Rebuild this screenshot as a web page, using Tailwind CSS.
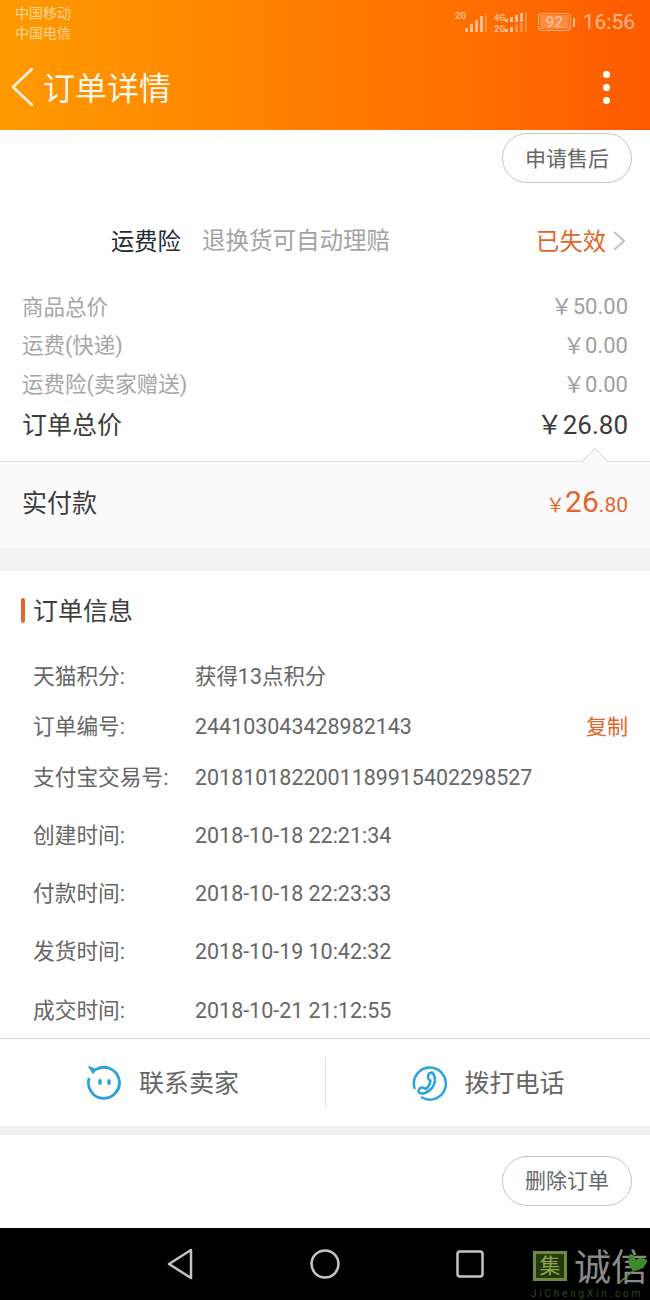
<!DOCTYPE html>
<html lang="zh-CN">
<head>
  <meta charset="UTF-8" />
  <meta name="viewport" content="width=device-width, initial-scale=1" />
  <title>订单详情</title>
  <script src="https://cdn.jsdelivr.net/npm/@tailwindcss/browser@4"></script>
</head>
<body class="bg-white">
  <div class="w-[650px] h-[1300px] overflow-hidden flex flex-col font-['Roboto','Noto_Sans_CJK_SC',sans-serif] text-[#666]">

    <!-- Header -->
    <header class="h-[130px] shrink-0 bg-gradient-to-r from-[#ff9a00] to-[#ff5a00] flex flex-col">
      <div class="h-[44px] flex justify-between pl-[15px] pr-[15px]">
        <div class="pt-[3px] text-[14px] leading-[20px] text-white/60">
          <div>中国移动</div>
          <div>中国电信</div>
        </div>
        <div class="flex items-center h-[44px] text-white/55">
          <svg width="76" height="24" viewBox="0 0 76 24" fill="none" class="mr-[7px]">
            <text x="0" y="9" font-size="9" font-weight="700" fill="currentColor" font-family="Roboto">2G</text>
            <g fill="currentColor">
              <rect x="10" y="18" width="3" height="4"/><rect x="15" y="14" width="3" height="8"/><rect x="20" y="10" width="3" height="12"/><rect x="25" y="6" width="3" height="16"/><rect x="30" y="3" width="1.500" height="19" opacity=".6"/>
              <rect x="50" y="9" width="3" height="3"/><rect x="55" y="7" width="3" height="5"/><rect x="60" y="5" width="3" height="7"/><rect x="65" y="3" width="3" height="9"/><rect x="70" y="2" width="1.500" height="10" opacity=".6"/>
              <rect x="50" y="19" width="3" height="3"/><rect x="55" y="17" width="3" height="5"/><rect x="60" y="15" width="3" height="7" opacity=".5"/><rect x="65" y="13" width="3" height="9" opacity=".5"/><rect x="70" y="12" width="1.500" height="10" opacity=".5"/>
            </g>
            <text x="39" y="11" font-size="9" font-weight="700" fill="currentColor" font-family="Roboto">4G</text>
            <text x="39" y="22" font-size="9" font-weight="700" fill="currentColor" font-family="Roboto">2G</text>
          </svg>
          <div class="w-[33px] h-[18px] border border-white/50 rounded-[3px] p-[1px]">
            <div class="w-full h-full bg-white/25 text-[15px] leading-[14px] text-center">92</div>
          </div>
          <div class="w-[2px] h-[9px] bg-white/55 ml-[2px] mr-[8px]"></div>
          <div class="text-[21px] leading-none">16:56</div>
        </div>
      </div>
      <div class="flex-1 flex items-center pl-[11px] pr-[40px]">
        <svg width="24" height="40" viewBox="0 0 24 40" fill="none" stroke="#fff" stroke-width="2.500" stroke-linecap="round" stroke-linejoin="round" class="mr-[8px] opacity-90">
          <path d="M21 2 L2 20 L21 38" />
        </svg>
        <div class="text-[32px] leading-[40px] text-white/95 pt-[4px] h-[44px]">订单详情</div>
        <div class="ml-auto flex flex-col gap-[6px]">
          <div class="w-[7px] h-[7px] rounded-full bg-white"></div>
          <div class="w-[7px] h-[7px] rounded-full bg-white"></div>
          <div class="w-[7px] h-[7px] rounded-full bg-white"></div>
        </div>
      </div>
    </header>

    <!-- Price summary -->
    <section class="h-[332px] shrink-0 flex flex-col relative">
      <div class="flex justify-end pt-[3px] pr-[18px]">
        <button class="w-[130px] h-[50px] pt-[3px] rounded-[25px] border border-[#c4c4c4] text-[21px] text-[#666]">申请售后</button>
      </div>
      <div class="flex items-center h-[44px] mt-[37px] pl-[111px] pr-[24px] text-[23.300px]">
        <span class="text-[#1f2a33]">运费险</span>
        <span class="ml-[21px] text-[#a3a3a3] text-[23.500px]">退换货可自动理赔</span>
        <span class="ml-auto text-[#e2662a]">已失效</span>
        <svg width="14" height="22" viewBox="0 0 14 22" fill="none" stroke="#c2c2c2" stroke-width="2" class="ml-[6px] -mt-[3px]"><path d="M2 2 L12 11 L2 20" /></svg>
      </div>
      <div class="mt-[25px] px-[22px] text-[21.500px] text-[#a6a6a6]">
        <div class="flex justify-between items-center h-[38px]"><span>商品总价</span><span class="text-[22px] text-[#a0a0a0] -mt-[3px]">￥50.00</span></div>
        <div class="flex justify-between items-center h-[39px]"><span>运费(快递)</span><span class="text-[22px] text-[#a0a0a0] -mt-[3px]">￥0.00</span></div>
        <div class="flex justify-between items-center h-[39px]"><span>运费险(卖家赠送)</span><span class="text-[22px] text-[#a0a0a0] -mt-[3px]">￥0.00</span></div>
        <div class="flex justify-between items-center h-[42px] text-[25px] text-[#3c3c3c]"><span>订单总价</span><span class="text-[26px] leading-none -mt-[3px]">￥26.80</span></div>
      </div>
      <div class="absolute left-[0px] bottom-[0px] w-full h-[1px] bg-[#dedede]"></div>
      <div class="absolute right-[45px] bottom-[-10px] w-[20px] h-[20px] rotate-45 bg-[#fafafa] border-l border-t border-[#dedede]"></div>
    </section>

    <section class="h-[86px] shrink-0 bg-[#fafafa] flex items-center justify-between px-[22px] pb-[2px]">
      <span class="text-[25px] text-[#3c3c3c]">实付款</span>
      <span class="text-[#e2662a] flex items-baseline text-[21px] leading-none pb-[4px]">
        <span class="text-[19px]">￥</span><span class="text-[30px]">26</span><span>.80</span>
      </span>
    </section>

    <div class="h-[23px] shrink-0 bg-[#f2f2f2]"></div>

    <!-- Order info -->
    <section class="h-[467px] shrink-0">
      <div class="flex items-center h-[81px] pl-[21px] text-[25px] text-[#3c3c3c]">
        <span class="w-[4px] h-[25px] rounded-[2px] bg-[#e2662a] mr-[8px] -mt-[2px]"></span>订单信息
      </div>
      <dl class="pl-[33px] pr-[22px] text-[21.450px] text-[#666]">
        <div class="flex items-center h-[50px]"><dt class="w-[162px] text-[21.700px]">天猫积分:</dt><dd>获得13点积分</dd></div>
        <div class="flex items-center h-[51px]"><dt class="w-[162px] text-[21.700px]">订单编号:</dt><dd>244103043428982143</dd><span class="ml-auto text-[21px] text-[#e2662a]">复制</span></div>
        <div class="flex items-center h-[50px]"><dt class="w-[162px] text-[21.700px]">支付宝交易号:</dt><dd>2018101822001189915402298527</dd></div>
        <div class="flex items-center h-[58px] mt-[4px]"><dt class="w-[162px] text-[21.700px]">创建时间:</dt><dd>2018-10-18 22:21:34</dd></div>
        <div class="flex items-center h-[58px]"><dt class="w-[162px] text-[21.700px]">付款时间:</dt><dd>2018-10-18 22:23:33</dd></div>
        <div class="flex items-center h-[58px]"><dt class="w-[162px] text-[21.700px]">发货时间:</dt><dd>2018-10-19 10:42:32</dd></div>
        <div class="flex items-center h-[60px]"><dt class="w-[162px] text-[21.700px]">成交时间:</dt><dd>2018-10-21 21:12:55</dd></div>
      </dl>
    </section>

    <!-- Contact -->
    <section class="h-[88px] shrink-0 border-t border-[#d8d8d8] flex items-center text-[25px] text-[#666]">
      <div class="w-[325px] flex items-center justify-center gap-[17px]">
        <svg width="36" height="36" viewBox="0 0 36 36" fill="none" stroke="#2aa3dc" stroke-width="2.800" stroke-linejoin="round">
          <path d="M10 4.500 A15.500 15.500 0 1 1 3.200 13" />
          <path d="M2.500 1.500 L10.500 4.500 L7 8.500 Z" fill="#2aa3dc" stroke-width="1" />
          <ellipse cx="14" cy="17" rx="1.800" ry="3" fill="#2aa3dc" stroke="none" />
          <ellipse cx="23" cy="17" rx="1.800" ry="3" fill="#2aa3dc" stroke="none" />
        </svg>
        <span class="pt-[3px]">联系卖家</span>
      </div>
      <div class="w-[1px] h-[50px] bg-[#e2e2e2]"></div>
      <div class="flex-1 flex items-center justify-center gap-[17px]">
        <svg width="36" height="36" viewBox="0 0 36 36" fill="none" stroke="#2aa3dc" stroke-width="2.500" stroke-linecap="round" stroke-linejoin="round">
          <path d="M3.500 23 A16 16 0 1 1 11 32.500" />
          <path d="M18 8.500 L21 7.500 C25 11 25 19 20 24 C16 28 11 29.500 8.500 28 C6.500 26 8 23 10.500 22.500 C12.500 22 13.500 23 14.500 24 C17 22.500 19 19 19.500 15.500 C18 15 16.500 13 17 11 Z" />
        </svg>
        <span class="pt-[3px]">拨打电话</span>
      </div>
    </section>

    <div class="h-[9px] shrink-0 bg-[#f2f2f2]"></div>

    <section class="h-[93px] shrink-0 flex justify-end items-start pt-[21px] pr-[18px]">
      <button class="w-[130px] h-[50px] pt-[2px] rounded-[25px] border border-[#c4c4c4] text-[21px] text-[#666]">删除订单</button>
    </section>

    <!-- Android nav bar -->
    <nav class="h-[72px] shrink-0 bg-black relative flex items-center">
      <div class="flex items-center pl-[167px]">
        <svg width="26" height="32" viewBox="0 0 26 32" fill="none" stroke="#c4c4c4" stroke-width="2.500" stroke-linejoin="round"><path d="M24 2 L2 16 L24 30 Z" /></svg>
        <svg width="30" height="30" viewBox="0 0 30 30" fill="none" stroke="#c4c4c4" stroke-width="2.500" class="ml-[117px]"><circle cx="15" cy="15" r="13.500" /></svg>
        <svg width="28" height="28" viewBox="0 0 28 28" fill="none" stroke="#c4c4c4" stroke-width="2.500" class="ml-[116px]"><rect x="1.500" y="1.500" width="25" height="25" rx="2.500" /></svg>
      </div>
      <!-- watermark -->
      <div class="absolute left-[533px] top-[23px] w-[34px] h-[30px] bg-[#6d8a3d] p-[3px]">
        <div class="w-full h-full bg-[#26380f] flex items-center justify-center text-[21px] leading-none text-[#8aa84a]">集</div>
      </div>
      <div class="absolute left-[574px] top-[23px] whitespace-nowrap text-[37px] leading-[36px] text-[#8a8a8a]">诚信</div>
      <svg width="32" height="32" viewBox="0 0 32 32" class="absolute left-[617px] top-[24px]">
        <path d="M16 19 C11 14 10 8 13 2 C16 2 18 5 19 8 C22 5 27 6 30 8 C30 13 24 19 16 19 Z" fill="#3f8a2c" />
        <path d="M16 19 L2 31" stroke="#6d8a3d" stroke-width="1.500" fill="none" />
      </svg>
      <div class="absolute left-[531px] top-[61px] text-[10px] leading-[10px] tracking-[2.800px] text-[#2f4a1a] whitespace-nowrap">JiChengXin.com</div>
    </nav>
  </div>
</body>
</html>
